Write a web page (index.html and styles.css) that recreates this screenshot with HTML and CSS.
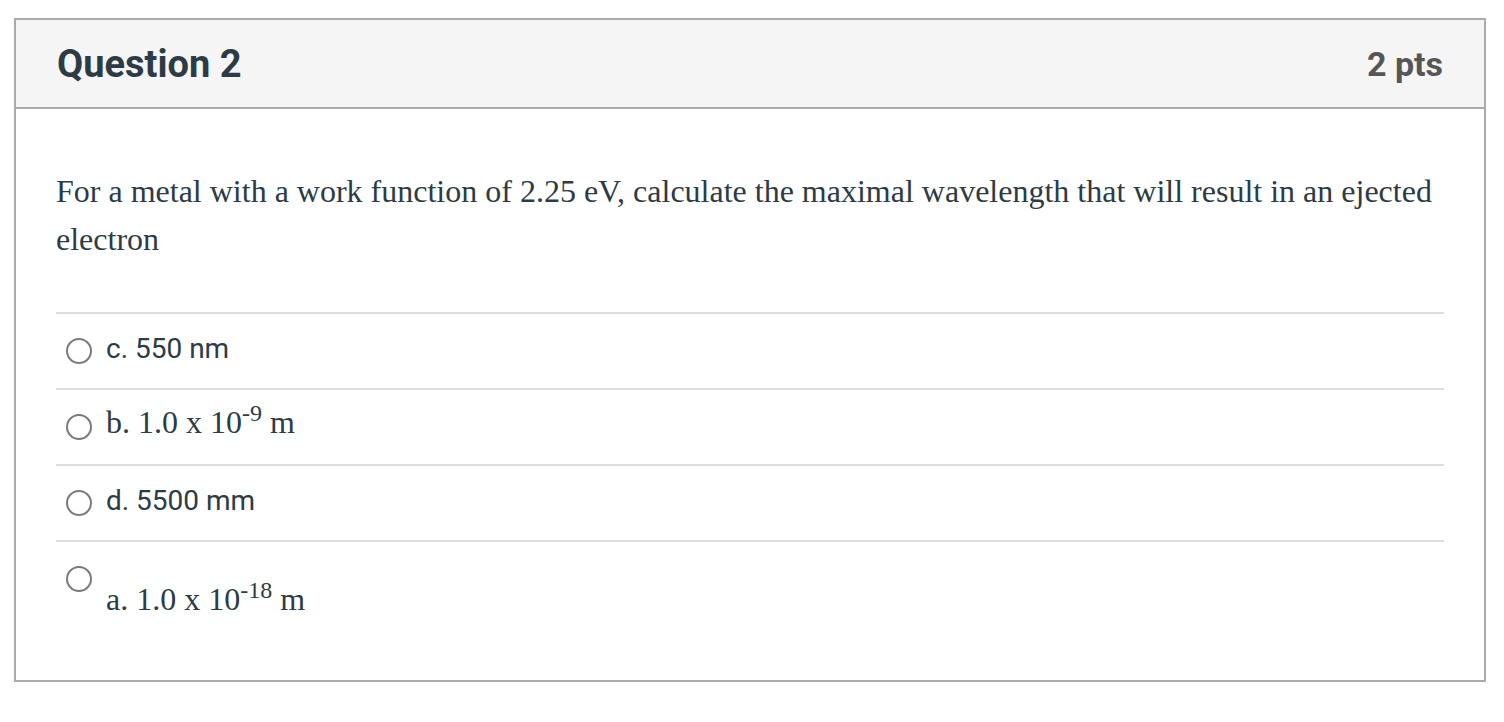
FILE: index.html
```html
<!DOCTYPE html>
<html lang="en">
<head>
<meta charset="utf-8">
<title>Question 2</title>
<link rel="stylesheet" href="styles.css">
</head>
<body>
<div class="question">
  <div class="question-header">
    <h2 class="question-title">Question 2</h2>
    <span class="question-points">2 pts</span>
  </div>
  <div class="question-body">
    <p class="question-text">For a metal with a work function of 2.25 eV, calculate the maximal wavelength that will result in an ejected electron</p>
    <div class="answers">
      <label class="answer">
        <span class="radio"></span>
        <span class="answer-text sans">c. 550 nm</span>
      </label>
      <label class="answer">
        <span class="radio"></span>
        <span class="answer-text serif">b. 1.0 x 10<sup>-9</sup> m</span>
      </label>
      <label class="answer">
        <span class="radio"></span>
        <span class="answer-text sans">d. 5500 mm</span>
      </label>
      <label class="answer answer-wrapped">
        <span class="radio"></span>
        <span class="answer-text serif">a. 1.0 x 10<sup>-18</sup> m</span>
      </label>
    </div>
  </div>
</div>
</body>
</html>
```
FILE: styles.css
```css
html, body {
  margin: 0;
  padding: 0;
  background: #ffffff;
}

body {
  padding: 18px 0 0 14px;
  color: #2d3b45;
}

.question {
  width: 1472px;
  box-sizing: border-box;
  border: 2px solid #ababab;
}

.question-header {
  display: flex;
  align-items: center;
  justify-content: space-between;
  height: 87px;
  padding: 0 41px 0 41px;
  background: #f5f5f5;
  border-bottom: 2px solid #ababab;
}

.question-title {
  margin: 0;
  font-family: Roboto, "Liberation Sans", sans-serif;
  font-weight: 700;
  font-size: 38px;
  color: #2d3b45;
}

.question-points {
  font-family: Roboto, "Liberation Sans", sans-serif;
  font-weight: 700;
  font-size: 34px;
  color: #565656;
}

.question-body {
  padding: 58px 40px 0 40px;
}

.question-text {
  margin: 0 0 49px 0;
  font-family: "Liberation Serif", "Times New Roman", serif;
  font-size: 32px;
  line-height: 48px;
  color: #2d3b45;
}

.answers {
  display: flex;
  flex-direction: column;
}

.answer {
  display: flex;
  align-items: center;
  height: 74px;
  border-top: 2px solid #dddddd;
}

.radio {
  flex: none;
  width: 26px;
  height: 26px;
  box-sizing: border-box;
  border: 2px solid #7a7a7a;
  border-radius: 50%;
  background: #fff;
  margin-left: 10px;
  margin-right: 14px;
}

.answer-text {
  color: #2d3b45;
  line-height: 36px;
  padding-bottom: 4px;
}

.answer-text.sans {
  font-family: Roboto, "Liberation Sans", Arial, sans-serif;
  font-size: 28px;
}

.answer-text.serif {
  font-family: "Liberation Serif", "Times New Roman", serif;
  font-size: 32px;
  padding-bottom: 10px;
}

.answer-text sup {
  line-height: 0;
  font-size: 0.75em;
  vertical-align: super;
}

.answer-wrapped {
  align-items: flex-start;
  height: auto;
  padding-bottom: 63px;
}

.answer-wrapped .radio {
  margin-top: 24px;
}

.answer-wrapped .answer-text.serif {
  display: block;
  margin-top: 39px;
  padding-bottom: 0;
}
```
